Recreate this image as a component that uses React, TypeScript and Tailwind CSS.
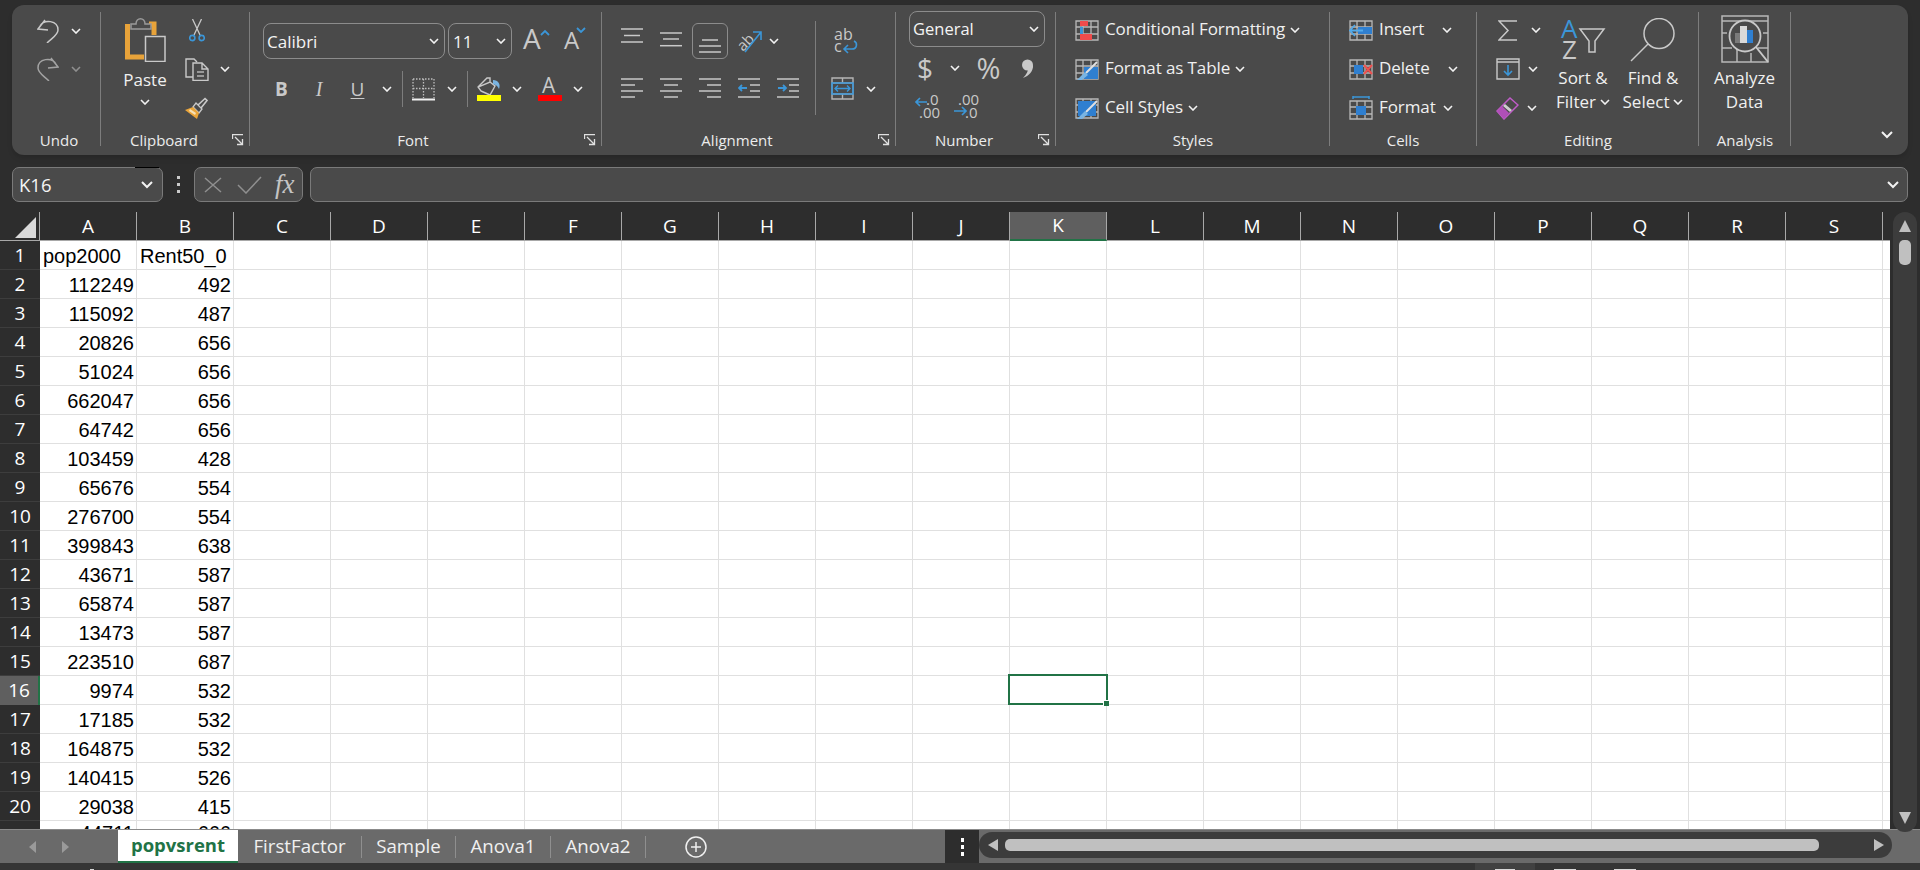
import type { ReactNode } from "react";

const LINE = "#c9c9c9";
const BLUE = "#3b96d8";
const SANS = "Open Sans";

const columns = "ABCDEFGHIJKLMNOPQRS".split("");

const rows: [string, string][] = [
  ["pop2000", "Rent50_0"],
  ["112249", "492"],
  ["115092", "487"],
  ["20826", "656"],
  ["51024", "656"],
  ["662047", "656"],
  ["64742", "656"],
  ["103459", "428"],
  ["65676", "554"],
  ["276700", "554"],
  ["399843", "638"],
  ["43671", "587"],
  ["65874", "587"],
  ["13473", "587"],
  ["223510", "687"],
  ["9974", "532"],
  ["17185", "532"],
  ["164875", "532"],
  ["140415", "526"],
  ["29038", "415"],
  ["44711", "666"],
];

function Chevron({ dim, className }: { dim?: boolean; className?: string }) {
  return (
    <svg width="10" height="6" viewBox="0 0 10 6" className={`shrink-0 ${className ?? ""}`}>
      <path d="M1 1 L5 5 L9 1" fill="none" stroke={dim ? "#8f8f8f" : "#f2f2f2"} strokeWidth="1.6" />
    </svg>
  );
}

function Launcher() {
  return (
    <svg width="12" height="12" viewBox="0 0 12 12" className="ml-auto mr-[5px] shrink-0">
      <path d="M0.5 5 V0.5 H11 M0.5 0.5 V4 M3 3 L10 10 M5 10.5 H10.5 V5" fill="none" stroke="#e0e0e0" strokeWidth="1.3" />
    </svg>
  );
}

function Group({
  width,
  label,
  labelWidth,
  launcher,
  children,
}: {
  width: string;
  label: string;
  labelWidth: string;
  launcher?: boolean;
  children: ReactNode;
}) {
  return (
    <div className={`${width} mt-[7px] flex h-[134px] shrink-0 flex-col border-r border-[#7d7d7d]`}>
      <div className="h-[118px] shrink-0">{children}</div>
      <div className="flex h-[19px] shrink-0 items-center">
        <span className={`${labelWidth} shrink-0 text-center text-[15px] leading-[18px] text-[#ececec]`}>{label}</span>
        {launcher && <Launcher />}
      </div>
    </div>
  );
}

function UndoIcon({ flip }: { flip?: boolean }) {
  return (
    <svg width="22" height="24" viewBox="0 0 22 24" className={flip ? "-scale-x-100" : ""}>
      <path
        d="M8 1 L1 10 L11 11 M3 7 C7 0 21 1 21 11 C21 16 15 19 10 24"
        fill="none"
        stroke={flip ? "#a3a3a3" : LINE}
        strokeWidth="1.5"
      />
    </svg>
  );
}

function PasteIcon() {
  return (
    <svg width="41" height="44" viewBox="0 0 41 44">
      <path d="M2.5 6 V39 H19 M24 6 H29 V17" fill="none" stroke="#e8a33a" strokeWidth="5" />
      <path d="M6 11 V6 H11 C11 -1 20 -1 20 6 H26 V11 Z" fill="#4a4a4a" stroke="#9a9a9a" strokeWidth="1.5" />
      <rect x="20.5" y="18.5" width="19.5" height="25" fill="#4a4a4a" stroke={LINE} strokeWidth="1.5" />
    </svg>
  );
}

function ScissorsIcon() {
  return (
    <svg width="16" height="23" viewBox="0 0 16 23">
      <path d="M3.5 0 L11 16 M12.5 0 L5 16" fill="none" stroke={LINE} strokeWidth="1.3" />
      <circle cx="3.3" cy="19" r="2.6" fill="none" stroke={BLUE} strokeWidth="1.6" />
      <circle cx="12.7" cy="19" r="2.6" fill="none" stroke={BLUE} strokeWidth="1.6" />
    </svg>
  );
}

function CopyIcon() {
  return (
    <svg width="24" height="23" viewBox="0 0 24 23">
      <path d="M8 19 H1 V1 H9 L12 4" fill="none" stroke={LINE} strokeWidth="1.4" />
      <path d="M8 5 H17 L23 11 V22.5 H8 Z M17 5 V11 H23" fill="#4a4a4a" stroke={LINE} strokeWidth="1.4" />
      <path d="M12 14 H19 M12 18 H19" stroke="#b4b4b4" strokeWidth="1.5" />
    </svg>
  );
}

function BrushIcon() {
  return (
    <svg width="23" height="22" viewBox="0 0 23 22">
      <path d="M13 8 L20 1.5 L22 3.5 L16 11" fill="none" stroke={LINE} strokeWidth="1.6" />
      <path d="M11 6 L17 12 L14 16 L8 10 Z" fill="#4a4a4a" stroke={LINE} strokeWidth="1.3" />
      <path d="M8 10 L14 16 L12 22 L0 13 Z" fill="#eaa53a" />
      <path d="M5 12 L11 16 L10 18 L4 14 Z" fill="#f7e2b8" />
    </svg>
  );
}

function BigLetter({ up }: { up: boolean }) {
  return (
    <svg width={up ? 27 : 21} height="24" viewBox={up ? "0 0 27 24" : "0 0 21 24"} className="overflow-visible">
      <text x="0" y="22" fontFamily={SANS} fontSize={up ? 28 : 24} fill={LINE}>
        A
      </text>
      <path d={up ? "M18 8 L22 4 L26 8" : "M13 1 L17 5 L21 1"} fill="none" stroke={BLUE} strokeWidth="1.8" />
    </svg>
  );
}

function BordersIcon() {
  return (
    <svg width="23" height="23" viewBox="0 0 23 23">
      <path d="M1 1 H22 V20 M1 1 V20 M1 10.5 H22 M11.5 1 V20" fill="none" stroke="#bdbdbd" strokeWidth="1.3" strokeDasharray="1.5 1.5" />
      <path d="M0 21.5 H23" stroke="#f0f0f0" strokeWidth="2" />
    </svg>
  );
}

function FillIcon() {
  return (
    <svg width="24" height="24" viewBox="0 0 24 24">
      <path d="M1 10 L10 1 L13 1 L13 5 M4 14 L13 18 L18 9 L13 5 L1 10 Z" fill="none" stroke={LINE} strokeWidth="1.4" />
      <path d="M16 3 C21 3 24 7 22 12 C21 10 20 8 16 7 Z" fill="#79b4e2" />
      <rect x="0" y="18" width="24" height="6" fill="#ffff00" />
    </svg>
  );
}

function FontColorIcon() {
  return (
    <svg width="24" height="24" viewBox="0 0 24 24" className="overflow-visible">
      <text x="4" y="16" fontFamily={SANS} fontSize="21" fill={LINE}>
        A
      </text>
      <rect x="0" y="18" width="24" height="6" fill="#ff0000" />
    </svg>
  );
}

// three or four ribbon lines, given as [y, x1, x2]
function LinesIcon({ lines, arrow }: { lines: number[][]; arrow?: string }) {
  return (
    <svg width="22" height="36" viewBox="0 0 22 36" className="shrink-0">
      {lines.map(([y, x1, x2]) => (
        <path key={`${y}-${x1}`} d={`M${x1} ${y} H${x2}`} stroke={LINE} strokeWidth="1.5" />
      ))}
      {arrow && <path d={arrow} fill="none" stroke={BLUE} strokeWidth="1.8" />}
    </svg>
  );
}

function OrientationIcon() {
  return (
    <svg width="25" height="24" viewBox="0 0 25 24" className="shrink-0 overflow-visible">
      <text x="-1" y="15" fontFamily={SANS} fontSize="15" fill={LINE} transform="rotate(-45 8 11) translate(-1 3)">
        ab
      </text>
      <path d="M8 23 L24 3 M16 3 H24 V11" fill="none" stroke={BLUE} strokeWidth="1.6" />
    </svg>
  );
}

function WrapIcon() {
  return (
    <svg width="24" height="23" viewBox="0 0 24 23" className="block overflow-visible">
      <text x="0" y="10" fontFamily={SANS} fontSize="16" fill={LINE}>
        ab
      </text>
      <text x="0" y="22" fontFamily={SANS} fontSize="16" fill={LINE}>
        c
      </text>
      <path d="M20 11 C24 13 23 19 18 19 H10 M14 15 L10 19 L14 23" fill="none" stroke={BLUE} strokeWidth="1.6" />
    </svg>
  );
}

function MergeIcon() {
  return (
    <svg width="23" height="23" viewBox="0 0 23 23" className="shrink-0">
      <path d="M1 1 H22 V22 H1 Z M1 6 H22 M1 17 H22 M11.5 1 V6 M11.5 17 V22" fill="none" stroke="#b5b5b5" strokeWidth="1.4" />
      <path d="M1 6 H22 V17 H1 Z" fill="none" stroke={BLUE} strokeWidth="1.6" />
      <path d="M4 11.5 H19 M7 8.5 L4 11.5 L7 14.5 M16 8.5 L19 11.5 L16 14.5" fill="none" stroke={BLUE} strokeWidth="1.4" />
    </svg>
  );
}

function DecimalIcon({ more }: { more?: boolean }) {
  return (
    <svg width="23" height="23" viewBox="0 0 23 23" className="shrink-0 overflow-visible">
      <text x={more ? 4 : 11} y="10" fontFamily={SANS} fontSize="15" fill={LINE}>
        {more ? ".00" : ".0"}
      </text>
      <text x={more ? 11 : 4} y="22.5" fontFamily={SANS} fontSize="15" fill={LINE}>
        {more ? ".0" : ".00"}
      </text>
      {more ? (
        <path d="M0 16 H12 M8 12 L12 16 L8 20" fill="none" stroke={BLUE} strokeWidth="1.7" />
      ) : (
        <path d="M12 7 H1 M5 3 L1 7 L5 11" fill="none" stroke={BLUE} strokeWidth="1.7" />
      )}
    </svg>
  );
}

function CommaIcon() {
  return (
    <svg width="13" height="19" viewBox="0 0 13 19" className="ml-[21px] shrink-0">
      <circle cx="6.5" cy="6" r="5.5" fill="#c9c9c9" />
      <path d="M12 6 C12.5 12 8 17 2 19 C6 15 7 12 7 9 Z" fill="#c9c9c9" />
    </svg>
  );
}

function SheetBase({ children }: { children: ReactNode }) {
  return (
    <svg width="24" height="21" viewBox="0 0 24 21" className="shrink-0">
      <path d="M1 1 H23 V20 H1 Z M1 7 H23 M1 14 H23 M8 1 V20 M16 1 V20" fill="none" stroke="#b8b8b8" strokeWidth="1.3" />
      {children}
    </svg>
  );
}

function CondIcon() {
  return (
    <SheetBase>
      <rect x="5" y="1" width="8" height="5" fill="#f04c4c" />
      <rect x="5" y="7" width="3" height="7" fill={BLUE} />
      <rect x="5" y="14" width="12" height="6" fill="#f04c4c" />
    </SheetBase>
  );
}

function TableBrushIcon({ full }: { full?: boolean }) {
  return (
    <SheetBase>
      <rect x={full ? 3 : 9} y={full ? 3 : 8} width={full ? 18 : 14} height={full ? 15 : 12} fill="#2f7fd0" />
      <path d="M22 3 L11 14" stroke="#e0e0e0" strokeWidth="2" />
      <path d="M10 13 L13 16 L7 21 L2 21 Z" fill="#79b4e2" />
    </SheetBase>
  );
}

function InsertIcon() {
  return (
    <SheetBase>
      <rect x="9" y="7" width="14" height="7" fill="#2f7fd0" />
      <path d="M14 10.5 H1 M6 5 L1 10.5 L6 16" fill="none" stroke="#52aaea" strokeWidth="1.8" />
    </SheetBase>
  );
}

function DeleteIcon() {
  return (
    <SheetBase>
      <rect x="5" y="6" width="9" height="9" fill="#2f7fd0" />
      <path d="M15 6 L23 15 M23 6 L15 15" stroke="#ef4f4f" strokeWidth="2" />
    </SheetBase>
  );
}

function FormatIcon() {
  return (
    <svg width="24" height="24" viewBox="0 0 24 24" className="shrink-0">
      <path d="M1 5 H23 V23 H1 Z M1 11 H23 M1 18 H23 M8 5 V23 M16 5 V23" fill="none" stroke="#b8b8b8" strokeWidth="1.3" />
      <path d="M4 1 H20 M4 0 V3 M20 0 V3" fill="none" stroke={BLUE} strokeWidth="1.5" />
      <rect x="7" y="10" width="10" height="9" fill="#2f7fd0" />
    </svg>
  );
}

function SigmaIcon() {
  return (
    <svg width="19" height="21" viewBox="0 0 19 21" className="shrink-0">
      <path d="M19 1 H1 L10 10.5 L1 20 H19" fill="none" stroke={LINE} strokeWidth="1.5" />
    </svg>
  );
}

function FillDownIcon() {
  return (
    <svg width="24" height="22" viewBox="0 0 24 22" className="shrink-0">
      <path d="M1 1 H23 V21 H1 Z M1 4 H23" fill="none" stroke={LINE} strokeWidth="1.4" />
      <path d="M12 7 V17 M8 13 L12 17 L16 13" fill="none" stroke={BLUE} strokeWidth="1.6" />
    </svg>
  );
}

function EraserIcon() {
  return (
    <svg width="23" height="23" viewBox="0 0 23 23" className="shrink-0">
      <path d="M8 22 L1 14 L14 1 L22 8 Z" fill="none" stroke="#c05cc9" strokeWidth="1.5" />
      <path d="M8 22 L1 14 L6 9 L13 16 Z" fill="#b04fb8" />
      <path d="M7 9 L14 15 L16 13 L9 7 Z" fill="#cfcfcf" />
    </svg>
  );
}

function SortIcon() {
  return (
    <svg width="44" height="42" viewBox="0 0 44 42" className="overflow-visible">
      <text x="0" y="20" fontFamily={SANS} fontSize="26" fill={BLUE}>
        A
      </text>
      <text x="1" y="41" fontFamily={SANS} fontSize="26" fill={LINE}>
        Z
      </text>
      <path d="M19 11 H43 L34 23 V34 H28 V23 Z" fill="none" stroke={LINE} strokeWidth="1.5" />
    </svg>
  );
}

function FindIcon() {
  return (
    <svg width="46" height="44" viewBox="0 0 46 44">
      <circle cx="29" cy="15.5" r="15" fill="none" stroke={LINE} strokeWidth="1.5" />
      <path d="M18 26 L1 43" stroke={LINE} strokeWidth="1.5" />
    </svg>
  );
}

function AnalyzeIcon() {
  return (
    <svg width="48" height="48" viewBox="0 0 48 48">
      <path d="M1 1 H47 V47 H1 Z M1 6 H47 M1 33 H11 M37 33 H47 M1 18 H6 M42 18 H47 M16 34 V47 M30 38 V47" fill="none" stroke="#b8b8b8" strokeWidth="1.5" />
      <circle cx="24" cy="21" r="15.5" fill="#4a4a4a" stroke={LINE} strokeWidth="1.8" />
      <path d="M35 32 L47 47" stroke={LINE} strokeWidth="2" />
      <rect x="14" y="18" width="6" height="10" fill="#7a7a7a" />
      <rect x="19" y="11" width="7" height="17" fill="#d9d9d9" />
      <rect x="26" y="15" width="6" height="13" fill="#2f7fd0" />
    </svg>
  );
}

function StyleRow({ icon, label }: { icon: ReactNode; label: string }) {
  return (
    <div className="flex h-[36px] items-center">
      {icon}
      <span className="-mt-[2px] ml-[6px] text-[17px] tracking-[-0.1px] text-[#f0f0f0]">{label}</span>
      <Chevron className="ml-[5px]" />
    </div>
  );
}

function CellRow({ icon, label, gap }: { icon: ReactNode; label: string; gap: string }) {
  return (
    <div className="flex h-[36px] items-center">
      {icon}
      <span className="-mt-[2px] ml-[6px] text-[17px] tracking-[-0.1px] text-[#f0f0f0]">{label}</span>
      <Chevron className={gap} />
    </div>
  );
}

function Ribbon() {
  return (
    <div className="mx-[12px] mt-[5px] flex h-[150px] shrink-0 rounded-[12px] bg-[#4a4a4a] shadow-md">
      <Group width="w-[89px]" label="Undo" labelWidth="w-[94px]">
        <div className="flex h-[36px] items-center pl-[25px] pt-[1px]">
          <UndoIcon />
          <Chevron className="ml-[12px]" />
        </div>
        <div className="mt-[3px] flex h-[36px] items-center pl-[25px]">
          <UndoIcon flip />
          <Chevron dim className="ml-[12px]" />
        </div>
      </Group>

      <Group width="w-[149px]" label="Clipboard" labelWidth="w-[126px]" launcher>
        <div className="flex">
          <div className="ml-[18px] flex w-[52px] flex-col items-center pt-[6px]">
            <PasteIcon />
            <span className="mt-[6px] text-[17px] leading-[24px] text-[#f0f0f0]">Paste</span>
            <Chevron className="mt-[7px]" />
          </div>
          <div className="ml-[14px] flex flex-col gap-[3px]">
            <div className="flex h-[36px] items-center pl-[4px]">
              <ScissorsIcon />
            </div>
            <div className="flex h-[36px] items-center">
              <CopyIcon />
              <Chevron className="ml-[11px]" />
            </div>
            <div className="flex h-[36px] items-center">
              <BrushIcon />
            </div>
          </div>
        </div>
      </Group>

      <Group width="w-[352px]" label="Font" labelWidth="w-[326px]" launcher>
        <div className="flex pl-[13px] pt-[11px]">
          <div className="flex h-[36px] w-[182px] items-center justify-between rounded-[8px] border border-[#8c8c8c] pl-[3px] pr-[5px] text-[17px] text-[#f4f4f4]">
            <span className="pt-[1px]">Calibri</span>
            <Chevron />
          </div>
          <div className="ml-[3px] flex h-[36px] w-[64px] items-center justify-between rounded-[8px] border border-[#8c8c8c] pl-[4px] pr-[5px] text-[17px] text-[#f4f4f4]">
            <span className="pt-[1px]">11</span>
            <Chevron />
          </div>
          <div className="ml-[11px] mt-[4px]">
            <BigLetter up />
          </div>
          <div className="ml-[14px] mt-[4px]">
            <BigLetter up={false} />
          </div>
        </div>
        <div className="mt-[12px] flex h-[36px] items-center pl-[13px] text-[#c9c9c9]">
          <span className="w-[37px] text-center text-[19px] font-bold">B</span>
          <span className="w-[38px] text-center font-['Liberation_Serif',serif] text-[20px] italic">I</span>
          <span className="w-[39px] text-center text-[19px] underline underline-offset-2">U</span>
          <Chevron className="ml-[5px]" />
          <div className="ml-[10px] h-[36px] w-px bg-[#7d7d7d]" />
          <div className="ml-[9px]">
            <BordersIcon />
          </div>
          <Chevron className="ml-[12px]" />
          <div className="ml-[10px] h-[36px] w-px bg-[#7d7d7d]" />
          <div className="ml-[9px]">
            <FillIcon />
          </div>
          <Chevron className="ml-[11px]" />
          <div className="ml-[16px]">
            <FontColorIcon />
          </div>
          <Chevron className="ml-[11px]" />
        </div>
      </Group>

      <Group width="w-[294px]" label="Alignment" labelWidth="w-[270px]" launcher>
        <div className="flex">
          <div className="w-[213px] shrink-0">
            <div className="mt-[11px] flex h-[36px] items-center pl-[19px]">
              <LinesIcon lines={[[6, 0, 22], [12.5, 3, 19], [19, 0, 22]]} />
              <div className="ml-[17px]">
                <LinesIcon lines={[[10, 0, 22], [16, 3, 19], [22.7, 0, 22]]} />
              </div>
              <div className="ml-[10px] flex h-[36px] w-[36px] items-center justify-center rounded-[6px] border border-[#8c8c8c]">
                <LinesIcon lines={[[17, 3, 19], [23, 0, 22], [29, 0, 22]]} />
              </div>
              <div className="ml-[9px]">
                <OrientationIcon />
              </div>
              <Chevron className="ml-[7px]" />
            </div>
            <div className="mt-[12px] flex h-[36px] items-center gap-[17px] pl-[19px]">
              <LinesIcon lines={[[8, 0, 22], [14, 0, 14], [20, 0, 22], [26, 0, 14]]} />
              <LinesIcon lines={[[8, 0, 22], [14, 4, 18], [20, 0, 22], [26, 4, 18]]} />
              <LinesIcon lines={[[8, 0, 22], [14, 8, 22], [20, 0, 22], [26, 8, 22]]} />
              <LinesIcon lines={[[8, 0, 22], [14, 12, 22], [20, 12, 22], [26, 0, 22]]} arrow="M9 17 H1 M4 14 L1 17 L4 20" />
              <LinesIcon lines={[[8, 0, 22], [14, 12, 22], [20, 12, 22], [26, 0, 22]]} arrow="M1 17 H9 M6 14 L9 17 L6 20" />
            </div>
          </div>
          <div className="mt-[9px] h-[94px] w-px shrink-0 bg-[#7d7d7d]" />
          <div className="pl-[18px] pt-[18px]">
            <WrapIcon />
            <div className="-ml-[3px] mt-[24px] flex items-center">
              <MergeIcon />
              <Chevron className="ml-[12px]" />
            </div>
          </div>
        </div>
      </Group>

      <Group width="w-[160px]" label="Number" labelWidth="w-[136px]" launcher>
        <div className="pl-[13px]">
          <div className="-mt-px flex h-[36px] w-[136px] items-center justify-between rounded-[8px] border border-[#8c8c8c] pl-[3px] pr-[5px] text-[16.5px] text-[#f4f4f4]">
            General
            <Chevron />
          </div>
          <div className="mt-[9px] flex h-[24px] items-center text-[#c9c9c9]">
            <span className="w-[32px] text-center text-[28px] leading-[24px]">$</span>
            <Chevron className="ml-[9px]" />
            <span className="ml-[16px] w-[24px] whitespace-nowrap text-center text-[29px] leading-[24px] tracking-[-1px]">%</span>
            <CommaIcon />
          </div>
          <div className="mt-[15px] flex gap-[16px] pl-[6px]">
            <DecimalIcon />
            <DecimalIcon more />
          </div>
        </div>
      </Group>

      <Group width="w-[274px]" label="Styles" labelWidth="w-[274px]">
        <div className="flex flex-col gap-[3px] pl-[19px]">
          <StyleRow icon={<CondIcon />} label="Conditional Formatting" />
          <StyleRow icon={<TableBrushIcon />} label="Format as Table" />
          <StyleRow icon={<TableBrushIcon full />} label="Cell Styles" />
        </div>
      </Group>

      <Group width="w-[147px]" label="Cells" labelWidth="w-[146px]">
        <div className="flex flex-col gap-[3px] pl-[19px]">
          <CellRow icon={<InsertIcon />} label="Insert" gap="ml-[18px]" />
          <CellRow icon={<DeleteIcon />} label="Delete" gap="ml-[18px]" />
          <CellRow icon={<FormatIcon />} label="Format" gap="ml-[7px]" />
        </div>
      </Group>

      <Group width="w-[222px]" label="Editing" labelWidth="w-[222px]">
        <div className="flex">
          <div className="flex w-[61px] shrink-0 flex-col gap-[3px]">
            <div className="flex h-[36px] items-center pl-[21px]">
              <SigmaIcon />
              <Chevron className="ml-[14px]" />
            </div>
            <div className="flex h-[36px] items-center pl-[19px]">
              <FillDownIcon />
              <Chevron className="ml-[8px]" />
            </div>
            <div className="flex h-[36px] items-center pl-[19px]">
              <EraserIcon />
              <Chevron className="ml-[8px]" />
            </div>
          </div>
          <div className="ml-[12px] flex w-[66px] shrink-0 flex-col items-center pt-[6px]">
            <div className="h-[44px]">
              <SortIcon />
            </div>
            <span className="mt-[4px] text-[17px] leading-[24px] text-[#f0f0f0]">Sort &amp;</span>
            <span className="flex items-center gap-[4px] whitespace-nowrap text-[17px] leading-[24px] text-[#f0f0f0]">
              Filter
              <Chevron />
            </span>
          </div>
          <div className="ml-[4px] flex w-[66px] shrink-0 flex-col items-center pt-[6px]">
            <div className="h-[44px]">
              <FindIcon />
            </div>
            <span className="mt-[4px] text-[17px] leading-[24px] text-[#f0f0f0]">Find &amp;</span>
            <span className="flex items-center gap-[4px] whitespace-nowrap text-[17px] leading-[24px] text-[#f0f0f0]">
              Select
              <Chevron />
            </span>
          </div>
        </div>
      </Group>

      <Group width="w-[92px]" label="Analysis" labelWidth="w-[92px]">
        <div className="flex flex-col items-center pt-[3px]">
          <AnalyzeIcon />
          <span className="mt-[3px] text-[17px] leading-[24px] text-[#f0f0f0]">Analyze</span>
          <span className="text-[17px] leading-[24px] text-[#f0f0f0]">Data</span>
        </div>
      </Group>

      <div className="flex flex-1 items-end justify-end pb-[16px] pr-[15px]">
        <svg width="12" height="8" viewBox="0 0 12 8">
          <path d="M1 1 L6 6 L11 1" fill="none" stroke="#f2f2f2" strokeWidth="2" />
        </svg>
      </div>
    </div>
  );
}

function FormulaBar() {
  return (
    <div className="mx-[12px] mt-[12px] flex h-[35px] shrink-0">
      <div className="relative flex w-[151px] items-center justify-between rounded-[7px] border border-[#7a7a7a] bg-[#4a4a4a] pl-[6px] pr-[9px] text-[18.5px] text-[#f4f4f4]">
        K16
        <svg width="12" height="8" viewBox="0 0 12 8">
          <path d="M1 1 L6 6 L11 1" fill="none" stroke="#f2f2f2" strokeWidth="2" />
        </svg>
        <div className="absolute -top-px left-[122px] h-px w-[24px] bg-black" />
      </div>
      <div className="flex w-[31px] flex-col items-center justify-center gap-[4px]">
        <div className="h-[3px] w-[3px] bg-[#c9c9c9]" />
        <div className="h-[3px] w-[3px] bg-[#c9c9c9]" />
        <div className="h-[3px] w-[3px] bg-[#c9c9c9]" />
      </div>
      <div className="flex w-[109px] items-center rounded-[7px] border border-[#7a7a7a] bg-[#4a4a4a] pl-[9px]">
        <svg width="18" height="16" viewBox="0 0 18 16">
          <path d="M1 1 L17 15 M17 1 L1 15" stroke="#8f8f8f" strokeWidth="1.5" />
        </svg>
        <svg width="25" height="18" viewBox="0 0 25 18" className="ml-[15px]">
          <path d="M1 9 L9 17 L24 1" fill="none" stroke="#8f8f8f" strokeWidth="1.5" />
        </svg>
        <span className="ml-[13px] font-['Liberation_Serif',serif] text-[27px] italic leading-none text-[#c4c4c4]">fx</span>
      </div>
      <div className="ml-[7px] flex flex-1 items-center justify-end rounded-[7px] border border-[#7a7a7a] bg-[#4a4a4a] pr-[8px]">
        <svg width="12" height="8" viewBox="0 0 12 8">
          <path d="M1 1 L6 6 L11 1" fill="none" stroke="#f2f2f2" strokeWidth="2" />
        </svg>
      </div>
    </div>
  );
}

function Grid() {
  return (
    <div className="h-[617px] w-[1890px] shrink-0 overflow-hidden bg-white font-['Liberation_Sans',Arial,sans-serif] text-[20px] text-black">
      <div className="flex h-[29px] border-b border-[#a8a8a8] bg-[#2d2d2d] font-['Open_Sans',sans-serif] text-[19px] text-white">
        <div className="flex w-[40px] shrink-0 items-end justify-end border-r border-[#a8a8a8] pb-[2px] pr-[3px]">
          <svg width="21" height="21" viewBox="0 0 21 21">
            <path d="M21 0 V21 H0 Z" fill="#d9d9d9" />
          </svg>
        </div>
        {columns.map((c) => (
          <div
            key={c}
            className={
              c === "K"
                ? "-mb-px flex w-[97px] shrink-0 items-center justify-center border-b-2 border-r border-b-[#217346] border-r-[#a8a8a8] bg-[#5f5f5f]"
                : "flex w-[97px] shrink-0 items-center justify-center border-r border-[#a8a8a8]"
            }
          >
            {c}
          </div>
        ))}
      </div>
      {rows.map(([a, b], i) => (
        <div key={i} className="flex h-[29px]">
          <div
            className={
              i === 15
                ? "flex w-[40px] shrink-0 items-center justify-center border-r-2 border-[#217346] bg-[#5f5f5f] font-['Open_Sans',sans-serif] text-[19px] text-white"
                : "flex w-[40px] shrink-0 items-center justify-center border-b border-[#3d3d3d] bg-[#2d2d2d] font-['Open_Sans',sans-serif] text-[19px] text-white"
            }
          >
            {i + 1}
          </div>
          <div className={`flex w-[97px] shrink-0 items-center border-b border-r border-[#e0e0e0] pl-[3px] pr-[2px] ${i === 20 ? "pb-[4px]" : "pt-[1px]"} ${i === 0 ? "justify-start" : "justify-end"}`}>{a}</div>
          <div className={`flex w-[97px] shrink-0 items-center border-b border-r border-[#e0e0e0] pl-[3px] pr-[2px] ${i === 20 ? "pb-[4px]" : "pt-[1px]"} ${i === 0 ? "justify-start" : "justify-end"}`}>{b}</div>
          {columns.slice(2).map((c) => (
            <div key={c} className="relative w-[97px] shrink-0 border-b border-r border-[#e0e0e0]">
              {c === "K" && i === 15 && (
                <div className="absolute -left-[2px] -top-[2px] z-10 h-[31px] w-[100px] border-2 border-[#217346]">
                  <div className="absolute -bottom-[3px] -right-[3px] h-[6px] w-[6px] border-l border-t border-white bg-[#217346]" />
                </div>
              )}
            </div>
          ))}
          <div className="flex-1 border-b border-[#e0e0e0]" />
        </div>
      ))}
    </div>
  );
}

function ScrollV() {
  return (
    <div className="relative z-10 -mb-[3px] ml-[3px] flex h-[620px] w-[24px] flex-col items-center rounded-full bg-[#3c3c3c] pt-[8px]">
      <svg width="12" height="12" viewBox="0 0 12 12">
        <path d="M6 0 L12 12 H0 Z" fill="#c0c0c0" />
      </svg>
      <div className="mt-[8px] h-[25px] w-[12px] rounded-[5px] bg-[#c0c0c0]" />
      <svg width="12" height="12" viewBox="0 0 12 12" className="mb-[8px] mt-auto">
        <path d="M0 0 H12 L6 12 Z" fill="#c0c0c0" />
      </svg>
    </div>
  );
}

function Tabs() {
  const others = [
    { name: "FirstFactor", w: "w-[124px]" },
    { name: "Sample", w: "w-[94px]" },
    { name: "Anova1", w: "w-[95px]" },
    { name: "Anova2", w: "w-[95px]" },
  ];

  return (
    <div className="flex h-[34px] shrink-0 border-t border-[#8a8a8a] bg-[#6a6a6a]">
      <div className="flex w-[118px] shrink-0 items-center pl-[29px]">
        <svg width="7" height="12" viewBox="0 0 7 12">
          <path d="M7 0 V12 L0 6 Z" fill="#9a9a9a" />
        </svg>
        <svg width="7" height="12" viewBox="0 0 7 12" className="ml-[26px]">
          <path d="M0 0 V12 L7 6 Z" fill="#9a9a9a" />
        </svg>
      </div>
      <div className="flex w-[120px] shrink-0 items-center justify-center border-b-2 border-[#217346] bg-white pb-[2px] text-[18.5px] font-bold text-[#217346]">
        popvsrent
      </div>
      {others.map((t) => (
        <div key={t.name} className="flex shrink-0 items-center">
          <div className={`${t.w} flex h-[22px] items-center justify-center whitespace-nowrap border-r border-[#8f8f8f] text-[18.7px] text-[#f0f0f0]`}>{t.name}</div>
        </div>
      ))}
      <div className="ml-[39px] flex items-center">
        <svg width="22" height="22" viewBox="0 0 22 22">
          <circle cx="11" cy="11" r="10" fill="none" stroke="#f0f0f0" strokeWidth="1.5" />
          <path d="M6 11 H16 M11 6 V16" stroke="#f0f0f0" strokeWidth="1.5" />
        </svg>
      </div>
      <div className="ml-[238px] flex w-[34px] shrink-0 flex-col items-center justify-center gap-[3px] bg-[#2d2d2d]">
        <div className="h-[4px] w-[3px] bg-white" />
        <div className="h-[4px] w-[3px] bg-white" />
        <div className="h-[4px] w-[3px] bg-white" />
      </div>
      <div className="mb-[5px] mt-[2px] flex w-[913px] shrink-0 items-center rounded-[13px] bg-[#3c3c3c] pl-[9px] pr-[8px]">
        <svg width="10" height="12" viewBox="0 0 10 12">
          <path d="M10 0 V12 L0 6 Z" fill="#c0c0c0" />
        </svg>
        <div className="ml-[7px] h-[12px] w-[814px] rounded-[5px] bg-[#c0c0c0]" />
        <svg width="10" height="12" viewBox="0 0 10 12" className="ml-auto">
          <path d="M0 0 V12 L10 6 Z" fill="#c0c0c0" />
        </svg>
      </div>
    </div>
  );
}

function StatusBar() {
  return (
    <div className="flex h-[7px] shrink-0 bg-[#353535]">
      <div className="ml-[90px] mt-[6px] h-px w-[4px] bg-[#d8d8d8]" />
      <div className="ml-[1381px] flex h-full w-[60px] items-end justify-center bg-[#414141]">
        <div className="h-px w-[20px] bg-[#d8d8d8]" />
      </div>
      <div className="ml-[19px] mt-[6px] h-px w-[22px] bg-[#d8d8d8]" />
      <div className="ml-[38px] mt-[6px] h-px w-[22px] bg-[#d8d8d8]" />
    </div>
  );
}

export default function App() {
  return (
    <div className="flex h-[870px] w-[1920px] flex-col overflow-hidden bg-[#2d2d2d] font-['Open_Sans',sans-serif]">
      <Ribbon />
      <FormulaBar />
      <div className="mt-[10px] flex h-[617px] shrink-0">
        <Grid />
        <ScrollV />
      </div>
      <Tabs />
      <StatusBar />
    </div>
  );
}
